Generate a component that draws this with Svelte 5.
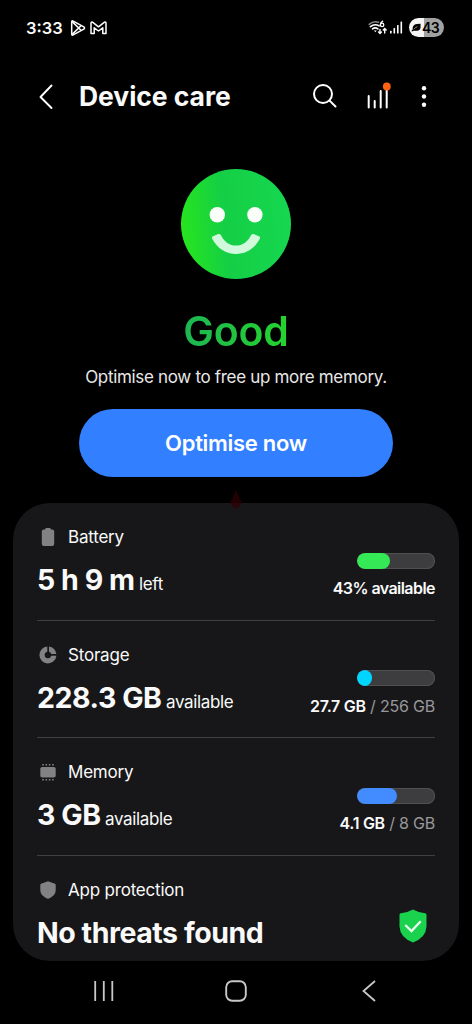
<script lang="ts">
  type Item = {
    id: string;
    label: string;
    value: string;
    unit?: string;
    percent?: number;
    color?: string;
    used?: string;
    total?: string;
  };

  const items: Item[] = [
    { id: 'battery', label: 'Battery', value: '5 h 9 m', unit: 'left', percent: 43, color: '#35e956', used: '43% available' },
    { id: 'storage', label: 'Storage', value: '228.3 GB', unit: 'available', percent: 20, color: '#00d5ff', used: '27.7 GB', total: '256 GB' },
    { id: 'memory', label: 'Memory', value: '3 GB', unit: 'available', percent: 51, color: '#428cff', used: '4.1 GB', total: '8 GB' },
    { id: 'protection', label: 'App protection', value: 'No threats found' },
  ];
</script>

<div class="screen">
  <div class="status-bar">
    <span class="time">3:33</span>
    <svg class="play" width="16" height="18" viewBox="0 0 16 18" fill="none" stroke="#fff" stroke-width="1.500" stroke-linejoin="round">
      <path d="M1.700 3v12q0 1.800 1.500.9L13.800 10.100q1.500-1.100 0-2.200L3.200 2.100Q1.700 1.200 1.700 3Z" />
      <path d="M2.200 2.600l8.800 8.600M2.200 15.400l8.800-8.600" />
    </svg>
    <svg class="mail" width="17" height="14" viewBox="0 0 17 14" fill="none" stroke="#fff" stroke-width="1.500" stroke-linejoin="round">
      <path d="M1 12.500V2q.2-1.400 1.500-.8l6 4.600 6-4.600Q15.800.6 16 2v10.500h-3.200V6.800L8.500 10 4.200 6.800v5.700Z" />
    </svg>
    <span class="spacer"></span>
    <svg class="wifi" width="20" height="16" viewBox="0 0 20 16" fill="none" stroke="#fff" stroke-width="1.600" stroke-linecap="round">
      <path d="M1.200 4.300Q5.500.7 10.500 2.300" stroke="#888" />
      <path d="M2.400 6.700q4.300-3.400 8.800-.8M4.500 8.900q2.700-2 5.400 0" />
      <path d="M5.900 10.600h2.800l-1.400 1.700Z" fill="#fff" stroke="none" />
      <path d="M14.700 1.200q-2.300 1.200-2.300 3.400" stroke-width="1.300" />
      <circle cx="14.100" cy="4.900" r="1.700" stroke-width="1.300" />
      <path d="M12 9.500v4M10.600 12.100l1.400 1.400 1.400-1.400M16.700 13V8.500M15.200 10l1.500-1.500 1.500 1.500" stroke-width="1.400" />
    </svg>
    <svg class="signal" width="13" height="13" viewBox="0 0 13 13" fill="#fff">
      <rect x="0" y="9.700" width="1.600" height="2.800" rx=".5" />
      <rect x="3.500" y="7" width="1.600" height="5.500" rx=".5" />
      <rect x="7" y="4" width="1.600" height="8.500" rx=".5" />
      <rect x="10.500" y=".5" width="1.600" height="12" rx=".5" />
    </svg>
    <div class="battery-pill">
      <svg width="10" height="9" viewBox="0 0 11 9">
        <path d="M10.500.3v4Q10.500 8 6.500 8H3L1 9 .5 8l1.300-1.200Q1.300 1.300 6.500.7Z" fill="#000" />
        <path d="M3 6.500Q4.500 4.500 7 3.500" fill="none" stroke="#fff" stroke-width=".6" />
      </svg>
      <span>43</span>
    </div>
  </div>

  <header class="toolbar">
    <svg class="back" width="14" height="26" viewBox="0 0 14 26" fill="none" stroke="#fff" stroke-width="1.900" stroke-linecap="round" stroke-linejoin="round">
      <path d="M12.500 1.500 1.500 13l11 11" />
    </svg>
    <h1>Device care</h1>
    <svg class="search" width="26" height="26" viewBox="0 0 26 26" fill="none" stroke="#fff" stroke-width="2" stroke-linecap="round">
      <circle cx="11" cy="11" r="9" />
      <path d="M17.600 17.600 23.500 23.500" />
    </svg>
    <svg class="chart" width="26" height="28" viewBox="0 0 26 28" fill="none" stroke="#fff" stroke-width="2" stroke-linecap="round">
      <path d="M2.700 14v11.500M8.700 19v6.500M14.700 9v16.500M20.700 6v19.500" />
      <circle cx="20.800" cy="4.500" r="3.900" fill="#ff6210" stroke="none" />
    </svg>
    <svg class="more" width="6" height="22" viewBox="0 0 6 22" fill="#fff">
      <circle cx="3" cy="2.300" r="2.200" />
      <circle cx="3" cy="10.500" r="2.200" />
      <circle cx="3" cy="18.700" r="2.200" />
    </svg>
  </header>

  <section class="summary">
    <svg class="face" width="110" height="110" viewBox="0 0 110 110">
      <defs>
        <linearGradient id="face-fill" x1="0" y1=".55" x2="1" y2=".45">
          <stop offset="0" stop-color="#27e51e" />
          <stop offset=".4" stop-color="#14cf45" />
          <stop offset="1" stop-color="#16d750" />
        </linearGradient>
      </defs>
      <circle cx="55" cy="55" r="55" fill="url(#face-fill)" />
      <circle cx="36.300" cy="45.800" r="7.700" fill="#fbfffa" />
      <circle cx="73.900" cy="45.800" r="7.700" fill="#fbfffa" />
      <path d="M31.500 67.500 37.300 65Q39 64.600 40 66.200C43.500 73 48.500 76.500 55 76.500S66.500 73 70 66.200Q71 64.600 72.700 65L78.500 67.500Q79.500 68.300 78.800 69.800C73.500 79.800 65 85 55 85S36.500 79.800 31.200 69.800Q30.500 68.300 31.500 67.500Z" fill="#d0fadb" />
    </svg>
    <div class="state">Good</div>
    <p>Optimise now to free up more memory.</p>
    <button>Optimise now</button>
  </section>

  <section class="card">
    <svg class="marker" width="14" height="18" viewBox="0 0 14 18">
      <path d="M7 0 13 13.500 9 18H5L1 13.500Z" fill="#300006" />
    </svg>
    {#each items as item}
      <div class="row">
        <div class="info">
          <div class="label">
            <svg width="18" height="18" viewBox="0 0 18 18" fill="#828284">
              {#if item.id === 'battery'}
                <path d="M6.300 1Q6.300 0 7.300 0h3.400q1 0 1 1v.6h1.500Q15.200 1.600 15.200 3.600V16q0 2-2 2H4.800q-2 0-2-2V3.600q0-2 2-2h1.500Z" />
              {:else if item.id === 'storage'}
                <path d="M8.300.5A8.500 8.500 0 1 0 17.400 9.700H12.200A3.300 3.300 0 1 1 8.300 5.800Z" />
                <path d="M10 .5A8.500 8.500 0 0 1 17.400 8.100H12.200A3.300 3.300 0 0 0 10 5.800Z" />
              {:else if item.id === 'memory'}
                <rect x="1.300" y="4" width="15.400" height="10.500" rx="1.800" />
                <path d="M3.200 1h1.600v1.600H3.200zM6.500 1h1.600v1.600H6.500zM9.800 1h1.600v1.600H9.800zM13.100 1h1.600v1.600h-1.600zM3.200 15.900h1.600v1.600H3.200zM6.500 15.900h1.600v1.600H6.500zM9.800 15.900h1.600v1.600H9.800zM13.100 15.900h1.600v1.600h-1.600z" />
              {:else}
                <path d="M9 .3 16 2.700q.7.300.7 1V9.500Q16.500 15 9 18 1.500 15 1.300 9.500V3.700q0-.7.700-1Z" />
              {/if}
            </svg>
            <span>{item.label}</span>
          </div>
          <div class="value">
            <strong>{item.value}</strong>
            {#if item.unit}<span>{item.unit}</span>{/if}
          </div>
        </div>
        {#if item.percent}
          <div class="usage">
            <div class="bar">
              <div class="fill" style="width: {item.percent}%; background: {item.color}"></div>
            </div>
            <div class="amount">
              <b class:tight={!item.total}>{item.used}</b>{#if item.total}<span>&nbsp;/ {item.total}</span>{/if}
            </div>
          </div>
        {:else}
          <svg class="shield" width="28" height="34" viewBox="0 0 28 34">
            <path d="M14 .5Q19 3.500 26.200 4.200 27.500 4.500 27.500 6V17.500Q27 28.500 14 33.500 1 28.500.5 17.500V6Q.5 4.500 1.800 4.200 9 3.500 14 .5Z" fill="#1bd24f" />
            <path d="m6.300 16 6.200 6 9.200-9.700" fill="none" stroke="#e9fff0" stroke-width="2.300" />
          </svg>
        {/if}
      </div>
    {/each}
  </section>

  <nav>
    <svg width="20" height="22" viewBox="0 0 20 22" stroke="#c8c8c8" stroke-width="1.800">
      <path d="M1.200 1v20M9.800 1v20M18.300 1v20" />
    </svg>
    <svg class="home" width="22" height="22" viewBox="0 0 22 22" fill="none" stroke="#c8c8c8" stroke-width="1.900">
      <rect x="1.200" y="1.200" width="19.600" height="19.600" rx="6" />
    </svg>
    <svg width="14" height="22" viewBox="0 0 14 22" fill="none" stroke="#c8c8c8" stroke-width="1.800">
      <path d="M13 1 1.500 11 13 21" />
    </svg>
  </nav>
</div>

<style>
  :global(body) {
    background: #000;
  }

  .screen {
    width: 472px;
    height: 1024px;
    display: flex;
    flex-direction: column;
    background: #000;
    color: #fafafa;
    font-family: Inter, 'Liberation Sans', sans-serif;
    overflow: hidden;
  }

  svg {
    display: block;
    flex: none;
  }

  .status-bar {
    display: flex;
    align-items: center;
    height: 55px;
    padding: 0 28px 0 26px;
  }

  .time {
    width: 44px;
    font-size: 16.500px;
    font-weight: 600;
  }

  .mail {
    margin-left: 4px;
  }

  .spacer {
    flex: 1;
  }

  .signal {
    margin: 0 6px 0 2px;
  }

  .battery-pill {
    display: flex;
    align-items: center;
    gap: 1px;
    box-sizing: border-box;
    width: 35px;
    height: 19px;
    padding-left: 2px;
    border-radius: 10px;
    background: linear-gradient(90deg, #f5f5f5 43%, #a2a2a2 43%);
    color: #000;
    font-size: 14px;
    font-weight: 600;
    letter-spacing: -0.6px;
  }

  .toolbar {
    display: flex;
    align-items: center;
    height: 83px;
    padding: 0 45px 0 39px;
  }

  h1 {
    flex: 1;
    margin: -2px 0 0 26px;
    font-size: 26.5px;
    font-weight: 700;
    letter-spacing: -0.05px;
    white-space: nowrap;
  }

  .search {
    margin-top: -1px;
  }

  .chart {
    margin: -1px 29px 0 28px;
  }

  .summary {
    display: flex;
    flex-direction: column;
    align-items: center;
    height: 365px;
  }

  .face {
    margin-top: 31.400px;
  }

  .state {
    margin-top: 26.600px;
    font-size: 41px;
    font-weight: 600;
    line-height: 50px;
    letter-spacing: -0.2px;
    color: transparent;
    background: linear-gradient(90deg, #1db653, #25d42d);
    background-clip: text;
  }

  p {
    margin: 8px 0 0;
    font-size: 17px;
    line-height: 26px;
    letter-spacing: -0.32px;
    color: #e8e8e8;
    white-space: nowrap;
  }

  button {
    width: 314px;
    height: 68px;
    margin-top: 19px;
    border: none;
    border-radius: 34px;
    background: #327fff;
    color: #fff;
    font-family: inherit;
    font-size: 22px;
    font-weight: 600;
    letter-spacing: -0.3px;
  }

  .card {
    position: relative;
    height: 458px;
    margin: 0 13px;
    border-radius: 37px;
    background: #171719;
  }

  .marker {
    position: absolute;
    top: -13px;
    left: 216px;
    opacity: 0.7;
  }

  .row {
    display: flex;
    justify-content: space-between;
    box-sizing: border-box;
    height: 117.7px;
    margin: 0 24px;
    border-bottom: 1px solid #404042;
  }

  .row:last-child {
    height: 104.900px;
    border-bottom: none;
  }

  .info {
    padding-top: 22px;
  }

  .label {
    display: flex;
    align-items: center;
    gap: 11px;
    height: 24px;
    padding-left: 2px;
    font-size: 17px;
    letter-spacing: -0.2px;
  }

  .value {
    margin-top: 11px;
    line-height: 40px;
    font-size: 17px;
    letter-spacing: -0.35px;
    white-space: nowrap;
  }

  .value strong {
    font-size: 28.500px;
    font-weight: 700;
    letter-spacing: -0.45px;
  }

  .usage {
    display: flex;
    flex-direction: column;
    align-items: flex-end;
    padding-top: 49.500px;
  }

  .bar {
    box-sizing: border-box;
    width: 78.500px;
    height: 16px;
    border-radius: 8px;
    background: #3d3d40;
    box-shadow: inset 0 0 0 1px #505053;
    overflow: hidden;
  }

  .fill {
    height: 100%;
    border-radius: 8px;
  }

  .amount {
    margin-top: 8.500px;
    font-size: 16px;
    line-height: 22px;
    letter-spacing: -0.2px;
    white-space: nowrap;
  }

  .amount b {
    font-weight: 600;
    letter-spacing: -0.3px;
  }

  .amount b.tight {
    letter-spacing: -0.55px;
  }

  .amount span {
    color: #98989a;
  }

  .shield {
    margin: 53px 8px 0 0;
  }

  nav {
    display: flex;
    align-items: center;
    justify-content: space-between;
    height: 60px;
    padding: 0 96px 0 94px;
  }

  .home {
    margin-right: 4px;
  }
</style>
